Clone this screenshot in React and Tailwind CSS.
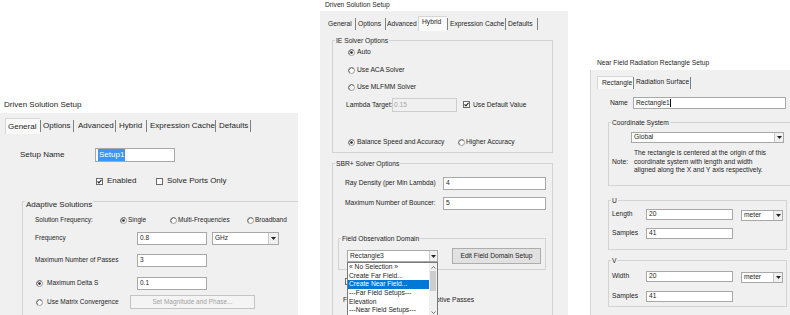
import React from "react";

function Radio({ on }) {
  return (
    <svg width="7" height="7" viewBox="0 0 7 7" className="shrink-0">
      <circle cx="3.5" cy="3.5" r="3" fill="#fff" stroke="#9a9a9a" strokeWidth="1" />
      <path d="M1.4 5.6 A3 3 0 0 1 5.6 1.4" fill="none" stroke="#6a6a6a" strokeWidth="1" />
      {on && <circle cx="3.5" cy="3.5" r="1.3" fill="#222" />}
    </svg>
  );
}

function Check({ on }) {
  return (
    <svg width="7" height="7" viewBox="0 0 7 7" className="shrink-0">
      <rect x="0.5" y="0.5" width="6" height="6" fill="#fff" stroke="#6b6b6b" />
      {on && <path d="M1.5 3.3 L2.9 4.9 L5.5 1.8" fill="none" stroke="#222" strokeWidth="1.1" />}
    </svg>
  );
}

function Arrow({ w = 10 }) {
  return (
    <div className={`h-full border-l border-[#c8c8c8] bg-[#f0f0f0] flex items-center justify-center shrink-0`} style={{ width: w }}>
      <svg width="5" height="3" viewBox="0 0 5 3">
        <path d="M0 0 L5 0 L2.5 3 Z" fill="#222" />
      </svg>
    </div>
  );
}

function Sep() {
  return <div className="w-px self-center h-[12px] bg-[#808080] shrink-0" />;
}

function Group({ label, className = "", children }) {
  return (
    <div className={`border border-[#d3d3d3] flex flex-col shrink-0 ${className}`}>
      <div className="-mt-[5px] ml-[2px] px-[1px] w-fit bg-[#f0f0f0] leading-[9px] whitespace-nowrap">{label}</div>
      {children}
    </div>
  );
}

function Input({ w, h = 13, children, className = "" }) {
  return (
    <div
      className={`border border-[#a8a8a8] bg-white flex items-center pl-[2px] whitespace-nowrap overflow-hidden shrink-0 ${className}`}
      style={{ width: w, height: h }}
    >
      {children}
    </div>
  );
}

function Select({ w, h = 13, value, aw = 10, className = "" }) {
  return (
    <div
      className={`border border-[#a8a8a8] bg-white flex items-stretch shrink-0 ${className}`}
      style={{ width: w, height: h }}
    >
      <span className="flex-1 pl-[2px] flex items-center whitespace-nowrap">{value}</span>
      <Arrow w={aw} />
    </div>
  );
}

function Panel1() {
  return (
    <div className="w-[298px] shrink-0 mt-[97px] flex flex-col overflow-hidden">
      <div className="h-[16px] flex items-center pl-[4px] text-[8px]">Driven Solution Setup</div>
      <div className="h-[202px] bg-[#f0f0f0] flex flex-col">
        <div className="mt-[5px] h-[16px] flex items-stretch pl-[5px] text-[8px] whitespace-nowrap">
          <div className="w-[35px] pl-[2px] flex items-center bg-[#fafafa] border-l border-t border-[#d6d6d6]">General</div>
          <Sep />
          <div className="w-[32px] pl-[2px] flex items-center">Options</div>
          <Sep />
          <div className="w-[41px] pl-[4px] flex items-center">Advanced</div>
          <Sep />
          <div className="w-[30px] pl-[3px] flex items-center">Hybrid</div>
          <Sep />
          <div className="w-[68px] pl-[3px] flex items-center">Expression Cache</div>
          <Sep />
          <div className="w-[34px] pl-[3px] flex items-center">Defaults</div>
          <Sep />
        </div>
        <div className="mt-[14px] h-[14px] flex items-center text-[8px]">
          <span className="ml-[20px] w-[75px]">Setup Name</span>
          <Input w={80} h={14}>
            <span className="bg-[#3399ff] text-white px-[1px]">Setup1</span>
          </Input>
        </div>
        <div className="mt-[15px] h-[8px] flex items-center text-[8px]">
          <div className="ml-[96px] w-[60px] flex items-center">
            <Check on />
            <span className="ml-[4px]">Enabled</span>
          </div>
          <div className="flex items-center">
            <Check />
            <span className="ml-[4px]">Solve Ports Only</span>
          </div>
        </div>
        <Group label={<span className="text-[8px]">Adaptive Solutions</span>} className="mt-[16px] ml-[22px] w-[300px] flex-1 border-b-0">
          <div className="text-[6.5px] flex flex-col">
            <div className="mt-[4px] h-[14px] flex items-center">
              <span className="ml-[12px] w-[85px]">Solution Frequency:</span>
              <div className="w-[50px] flex items-center"><Radio on /><span className="ml-[1px]">Single</span></div>
              <div className="w-[77px] flex items-center"><Radio /><span className="ml-[1px]">Multi-Frequencies</span></div>
              <div className="flex items-center"><Radio /><span className="ml-[1px]">Broadband</span></div>
            </div>
            <div className="mt-[4px] h-[14px] flex items-center">
              <span className="ml-[12px] w-[102px]">Frequency</span>
              <Input w={70}>0.8</Input>
              <Select w={67} value="GHz" className="ml-[5px]" />
            </div>
            <div className="mt-[8px] h-[14px] flex items-center">
              <span className="ml-[12px] w-[102px]">Maximum Number of Passes</span>
              <Input w={70}>3</Input>
            </div>
            <div className="mt-[9px] h-[14px] flex items-center">
              <div className="ml-[13px] w-[101px] flex items-center"><Radio on /><span className="ml-[4px]">Maximum Delta S</span></div>
              <Input w={70}>0.1</Input>
            </div>
            <div className="mt-[5px] h-[14px] flex items-center">
              <div className="ml-[13px] w-[94px] flex items-center"><Radio /><span className="ml-[4px]">Use Matrix Convergence</span></div>
              <div className="w-[125px] h-[14px] border border-[#c4c4c4] bg-[#f4f4f4] text-[#a3a3a3] flex items-center justify-center">Set Magnitude and Phase...</div>
            </div>
          </div>
        </Group>
      </div>
    </div>
  );
}

function Panel2() {
  const items = [
    "« No Selection »",
    "Create Far Field...",
    "Create Near Field...",
    "---Far Field Setups---",
    "Elevation",
    "---Near Field Setups---",
  ];
  return (
    <div className="w-[248px] ml-[22px] shrink-0 flex flex-col text-[6.7px] overflow-hidden">
      <div className="h-[11px] flex items-center pl-[5px]">Driven Solution Setup</div>
      <div className="h-[304px] bg-[#f0f0f0] flex flex-col">
        <div className="mt-[6px] h-[14px] flex items-stretch pl-[5px] whitespace-nowrap">
          <div className="w-[30px] pl-[3px] flex items-center">General</div>
          <Sep />
          <div className="w-[29px] pl-[2px] flex items-center">Options</div>
          <Sep />
          <div className="w-[32px] pl-[1px] flex items-center">Advanced</div>
          <div className="w-[29px] pl-[3px] pb-[3px] flex items-center bg-[#fafafa] border-l border-t border-[#d6d6d6] -mt-[1px]">Hybrid</div>
          <Sep />
          <div className="w-[57px] pl-[2px] flex items-center">Expression Cache</div>
          <Sep />
          <div className="w-[31px] pl-[2px] flex items-center">Defaults</div>
          <Sep />
        </div>
        <Group label="IE Solver Options" className="mt-[9px] ml-[12px] w-[221px] h-[113px]">
          <div className="mt-[2px] h-[10px] flex items-center pl-[15px]"><Radio on /><span className="ml-[2px]">Auto</span></div>
          <div className="mt-[8px] h-[10px] flex items-center pl-[15px]"><Radio /><span className="ml-[2px]">Use ACA Solver</span></div>
          <div className="mt-[7px] h-[10px] flex items-center pl-[15px]"><Radio /><span className="ml-[2px]">Use MLFMM Solver</span></div>
          <div className="mt-[6px] h-[14px] flex items-center">
            <span className="ml-[13px] w-[46px] whitespace-nowrap">Lambda Target:</span>
            <div className="w-[65px] h-[14px] border border-[#cdcdcd] bg-[#f0f0f0] text-[#a8a8a8] pl-[1px] flex items-center">0.15</div>
            <div className="ml-[6px] flex items-center"><Check on /><span className="ml-[3px]">Use Default Value</span></div>
          </div>
          <div className="mt-[25px] h-[10px] flex items-center">
            <div className="ml-[15px] w-[110px] flex items-center"><Radio on /><span className="ml-[2px]">Balance Speed and Accuracy</span></div>
            <div className="flex items-center"><Radio /><span className="ml-[1px]">Higher Accuracy</span></div>
          </div>
        </Group>
        <Group label="SBR+ Solver Options" className="mt-[10px] ml-[12px] w-[221px] flex-1 border-b-0">
          <div className="mt-[9px] h-[13px] flex items-center">
            <span className="ml-[12px] w-[98px] whitespace-nowrap">Ray Density (per Min Lambda)</span>
            <Input w={103}>4</Input>
          </div>
          <div className="mt-[7px] h-[13px] flex items-center">
            <span className="ml-[12px] w-[98px] whitespace-nowrap">Maximum Number of Bouncer:</span>
            <Input w={103}>5</Input>
          </div>
          <Group label="Field Observation Domain" className="mt-[28px] ml-[5px] w-[208px] h-[32px]">
            <div className="mt-[5px] h-[16px] flex items-center">
              <div className="ml-[8px] relative">
                <Select w={91} h={12} value="Rectangle3" aw={8} />
                <div className="absolute top-[12px] left-0 w-[91px] h-[56px] bg-white border border-[#7a7a7a] flex z-10">
                  <div className="flex-1 flex flex-col">
                    {items.map((t, i) => (
                      <div
                        key={i}
                        className={`h-[8.7px] leading-[8.7px] pl-[1px] whitespace-nowrap ${i === 2 ? "bg-[#0078d7] text-white" : ""}`}
                      >
                        {t}
                      </div>
                    ))}
                  </div>
                  <div className="w-[8px] bg-[#f0f0f0] flex flex-col items-center">
                    <svg width="5" height="7" viewBox="0 0 5 7" className="mt-[1px]"><path d="M0.5 4.5 L2.5 2.5 L4.5 4.5" fill="none" stroke="#555" strokeWidth="0.8" /></svg>
                    <div className="w-[6px] h-[20px] bg-[#cdcdcd]" />
                    <div className="flex-1" />
                    <svg width="5" height="7" viewBox="0 0 5 7" className="mb-[1px]"><path d="M0.5 2.5 L2.5 4.5 L4.5 2.5" fill="none" stroke="#555" strokeWidth="0.8" /></svg>
                  </div>
                </div>
              </div>
              <div className="ml-[14px] w-[89px] h-[16px] border border-[#adadad] bg-[#e1e1e1] flex items-center justify-center whitespace-nowrap">Edit Field Domain Setup</div>
            </div>
          </Group>
          <div className="mt-[7px] h-[8px] flex items-center">
            <div className="ml-[12px] flex items-center"><Check /></div>
          </div>
          <div className="mt-[11px] h-[8px] flex items-center whitespace-nowrap">
            <span className="ml-[10px]">F</span>
            <span className="ml-[89px]">ptive Passes</span>
          </div>
        </Group>
      </div>
    </div>
  );
}

function Panel3() {
  return (
    <div className="w-[200px] ml-[22px] mt-[56px] shrink-0 flex flex-col text-[6.7px] overflow-hidden">
      <div className="h-[14px] flex items-center pl-[7px] whitespace-nowrap">Near Field Radiation Rectangle Setup</div>
      <div className="h-[245px] bg-[#f0f0f0] border-l border-[#d4d4d4] flex flex-col">
        <div className="mt-[6px] h-[13px] flex items-stretch pl-[6px] whitespace-nowrap">
          <div className="w-[36px] pl-[4px] flex items-center bg-[#fafafa] border-l border-t border-[#d6d6d6]">Rectangle</div>
          <Sep />
          <div className="w-[56px] pl-[2px] flex items-center">Radiation Surface</div>
          <Sep />
        </div>
        <div className="mt-[8px] h-[12px] flex items-center">
          <span className="ml-[19px] w-[23px]">Name</span>
          <Input w={153} h={12}>
            Rectangle1<span className="w-px h-[8px] bg-[#111] ml-[0.5px]" />
          </Input>
        </div>
        <Group label="Coordinate System" className="mt-[13px] ml-[17px] w-[190px] h-[64px]">
          <div className="mt-[5px] h-[11px] flex">
            <Select w={153} h={11} value="Global" className="ml-[22px]" aw={9} />
          </div>
          <div className="mt-[6px] flex items-center">
            <span className="ml-[3px] w-[22px]">Note:</span>
            <div className="leading-[8.5px] whitespace-nowrap">
              The rectangle is centered at the origin of this
              <br />
              coordinate system with length and width
              <br />
              aligned along the X and Y axis respectively.
            </div>
          </div>
        </Group>
        <Group label="U" className="mt-[14px] ml-[17px] w-[179px] h-[50px]">
          <div className="mt-[4px] h-[11px] flex items-center">
            <span className="ml-[3px] w-[34px]">Length</span>
            <Input w={87} h={11}>20</Input>
            <Select w={42} h={11} value="meter" className="ml-[8px] mt-[2px]" aw={9} />
          </div>
          <div className="mt-[8px] h-[11px] flex items-center">
            <span className="ml-[3px] w-[34px]">Samples</span>
            <Input w={87} h={11}>41</Input>
          </div>
        </Group>
        <Group label="V" className="mt-[10px] ml-[17px] w-[179px] h-[47px]">
          <div className="mt-[6px] h-[11px] flex items-center">
            <span className="ml-[3px] w-[34px]">Width</span>
            <Input w={87} h={11}>20</Input>
            <Select w={42} h={11} value="meter" className="ml-[8px] mt-[2px]" aw={9} />
          </div>
          <div className="mt-[9px] h-[11px] flex items-center">
            <span className="ml-[3px] w-[34px]">Samples</span>
            <Input w={87} h={11}>41</Input>
          </div>
        </Group>
      </div>
    </div>
  );
}

export default function App() {
  return (
    <div className="w-[790px] h-[315px] bg-white flex items-start overflow-hidden text-[#1e1e1e] font-['Liberation_Sans',Arial,sans-serif]">
      <Panel1 />
      <Panel2 />
      <Panel3 />
    </div>
  );
}
